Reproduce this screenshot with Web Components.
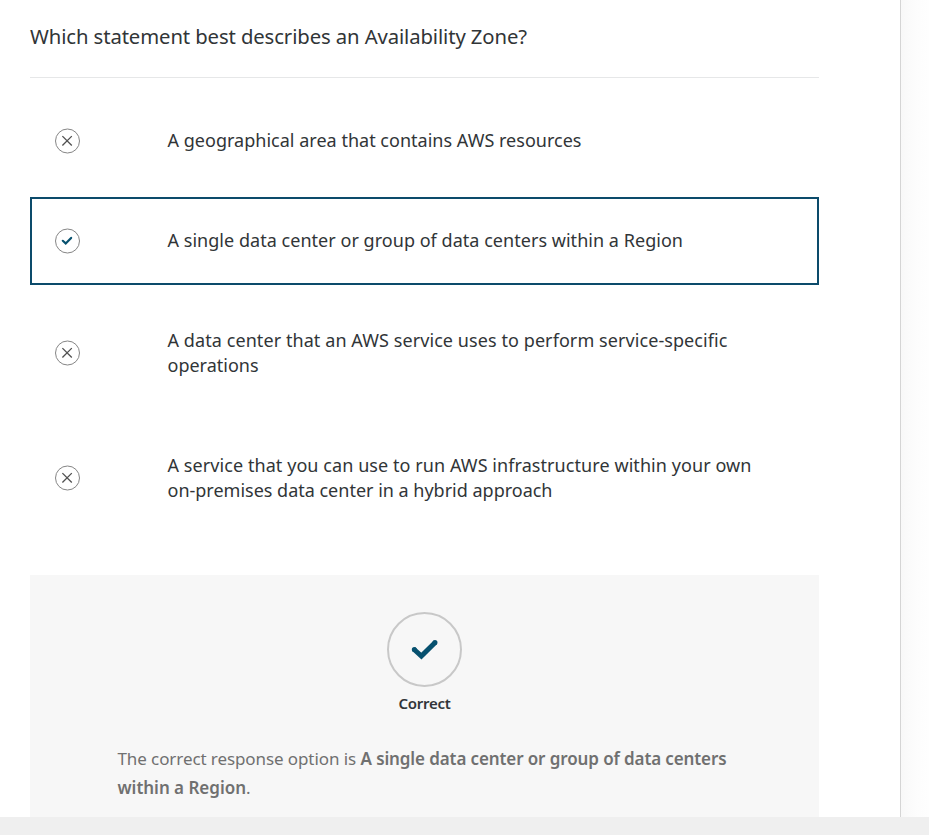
<!DOCTYPE html>
<html lang="en">
<head>
<meta charset="utf-8">
<title>Knowledge check</title>
<style>
html,body{margin:0;height:100%;overflow:hidden;background:#fff}
body{font-family:"Noto Sans","Open Sans",sans-serif;color:#313537}
</style>
</head>
<body>
<quiz-page>
  <quiz-question><fit-text width="497">Which statement best describes an Availability Zone?</fit-text></quiz-question>
  <quiz-option><fit-text width="414">A geographical area that contains AWS resources</fit-text></quiz-option>
  <quiz-option correct><fit-text width="515.5">A single data center or group of data centers within a Region</fit-text></quiz-option>
  <quiz-option><fit-text width="560">A data center that an AWS service uses to perform service-specific</fit-text><br><fit-text width="91">operations</fit-text></quiz-option>
  <quiz-option><fit-text width="584">A service that you can use to run AWS infrastructure within your own</fit-text><br><fit-text width="385">on-premises data center in a hybrid approach</fit-text></quiz-option>
  <quiz-feedback>
    <fit-text slot="title" width="52">Correct</fit-text>
    <fit-text width="238.5">The correct response option is</fit-text><fit-text bold gap="4.5" width="366">A single data center or group of data centers</fit-text><br><fit-text bold width="128.5">within a Region</fit-text>.
  </quiz-feedback>
</quiz-page>
<script>
function define(name, html, setup) {
  customElements.define(name, class extends HTMLElement {
    connectedCallback() {
      if (!this.shadowRoot) this.attachShadow({ mode: 'open' }).innerHTML = html;
      if (setup) setup(this);
    }
  });
}

define('quiz-page', `<style>
  :host{display:grid;grid-template:1fr 18px / 900px 1fr;height:835px;width:929px}
  main{min-height:0;overflow:hidden;padding:0 81px 0 30px;box-sizing:border-box}
  aside{border-left:1px solid #d5d5d5;background:linear-gradient(90deg,#f8f8f8,#fbfbfb 8px,#fdfdfd 18px,#fefefe)}
  footer{grid-column:1 / 3;background:#efefef}
</style><main><slot></slot></main><aside></aside><footer></footer>`);

define('quiz-question', `<style>
  :host{display:block;box-sizing:border-box;height:78px;margin-bottom:19px;padding-top:21px;font-size:20.3px;line-height:30px;border-bottom:1px solid #e6e7e8}
</style><slot></slot>`);

define('quiz-option', `<style>
  :host{display:flex;align-items:center;box-sizing:border-box;min-height:88px;margin-bottom:12px;padding:29px 23px 30px;border:2px solid transparent;font-size:18px;line-height:25px}
  :host([correct]){border-color:#0c4b6b}
  svg{flex:none;width:26px;height:26px;margin:-1px 86.5px -1px 0;fill:none}
  circle{stroke:#858585;stroke-width:1}
  .x{stroke:#505050;stroke-width:1.3}
  .c{stroke:#07516f;stroke-width:2.2;display:none}
  :host([correct]) .x{display:none}
  :host([correct]) .c{display:inline}
  div{white-space:nowrap}
</style>
<svg viewBox="0 0 26 26"><circle cx="12.5" cy="13" r="12"/><path class="x" d="M7.4 8.1 16.8 17.5M16.8 8.1 7.4 17.5"/><path class="c" stroke-linecap="round" d="M7.8 12.8 10.7 15.4 16.1 9.9"/></svg>
<div><slot></slot></div>`);

define('quiz-feedback', `<style>
  :host{display:flex;flex-direction:column;align-items:center;margin-top:40px;padding:37px 0 40px;background:#f7f7f7}
  svg{display:block;width:76px;height:76px;fill:none}
  h2{margin:3px 0 0;font-size:15px;line-height:24px;font-weight:600;color:#313539}
  p{margin:29px 0 0;align-self:stretch;padding-left:87.5px;font-size:17px;line-height:29px;color:#707070;white-space:nowrap}
</style>
<svg viewBox="0 0 76 76"><circle cx="37.5" cy="37.5" r="36.5" stroke="#c8c8c8" stroke-width="2"/><path d="M26.6 37 34.4 44 48.4 30.2" stroke="#07516f" stroke-width="5"/><path d="M27.3 37.6h0M48 30.6h0" stroke="#07516f" stroke-width="5" stroke-linecap="round"/></svg>
<h2><slot name="title"></slot></h2><p><slot></slot></p>`);

/* Spreads one line of text over a given width by adjusting its tracking. */
define('fit-text', `<style>
  :host{display:inline-block;vertical-align:top;white-space:nowrap}
  :host([bold]){font-weight:600}
</style><slot></slot>`, el => {
  if (el.hasAttribute('gap')) el.style.marginLeft = el.getAttribute('gap') + 'px';
  const natural = el.getBoundingClientRect().width;
  const target = +el.getAttribute('width');
  el.style.letterSpacing = (target - natural) / el.textContent.length + 'px';
});
</script>
</body>
</html>
